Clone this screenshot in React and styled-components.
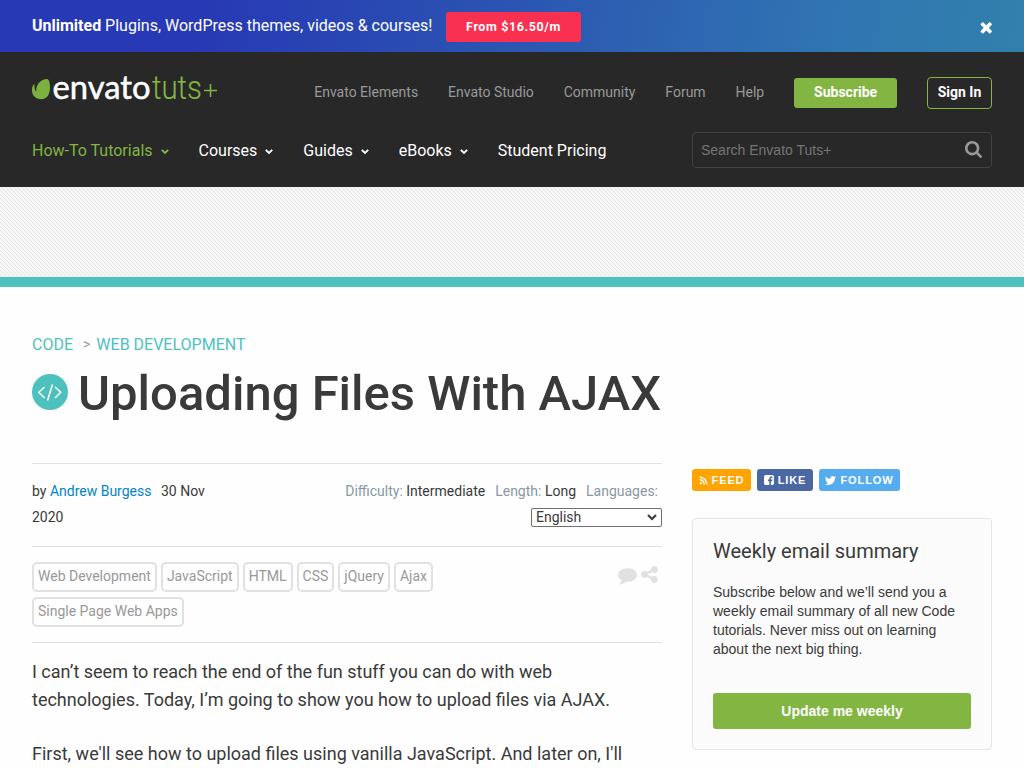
import React from "react";
import styled, { createGlobalStyle } from "styled-components";
import { FaRss, FaTwitter } from "react-icons/fa";

const roboto = `Roboto, "Liberation Sans", sans-serif`;
const arial = `"Liberation Sans", Arial, sans-serif`;

const Global = createGlobalStyle`
  *, *::before, *::after { box-sizing: border-box; }
  html, body { margin: 0; padding: 0; }
  body { background: #fefefe; font-family: ${roboto}; color: #3a3a3a; height: 768px; overflow: hidden; }
  h1, h2, p { margin: 0; font-weight: 400; }
  a { color: inherit; text-decoration: none; }
  svg { display: block; flex: none; }
`;

const Banner = styled.div`
  display: flex;
  align-items: flex-start;
  height: 52px;
  padding: 12px 32px 0;
  background: linear-gradient(100deg, #2739b4 0%, #2739b4 20%, #2b55b1 50%, #3076b2 82%, #3180ac 100%);
  color: #fff;
`;
const BannerText = styled.div`
  font-size: 16px;
  line-height: 27px;
  width: 414px;
  white-space: nowrap;
`;
const PriceButton = styled.a`
  width: 135px;
  height: 30px;
  border-radius: 3px;
  background: #f9304f;
  font-size: 12.5px;
  font-weight: 700;
  letter-spacing: 0.6px;
  line-height: 30px;
  text-align: center;
`;
const Close = styled.button`
  margin: 9px 0 0 auto;
  padding: 0;
  border: 0;
  background: none;
  color: #fff;
`;

const Header = styled.header`
  height: 135px;
  padding: 25px 32px 0;
  background: #282828;
`;
const HeaderRow = styled.div`
  display: flex;
  align-items: flex-start;
  justify-content: space-between;
  height: ${(p) => p.$height}px;
`;
const SiteNav = styled.nav`
  display: flex;
  gap: 29.9px;
  font-size: 14px;
  line-height: 30px;
  color: #999;
`;
const Subscribe = styled.a`
  width: 103px;
  height: 30px;
  margin-top: 1px;
  border-radius: 3px;
  background: #82b541;
  color: #fff;
  font-weight: 700;
  line-height: 28px;
  text-align: center;
`;
const SignIn = styled.a`
  width: 65px;
  height: 32px;
  border: 1px solid #82b541;
  border-radius: 4px;
  color: #fff;
  font-weight: 700;
  line-height: 28px;
  text-align: center;
`;
const MainNav = styled.nav`
  display: flex;
  gap: 30px;
  font-size: 16px;
  line-height: 38px;
`;
const MainLink = styled.a`
  display: flex;
  align-items: center;
  gap: 8px;
  color: ${(p) => (p.$active ? "#82b541" : "#fff")};
  svg { margin-top: 2px; }
`;
const Search = styled.div`
  display: flex;
  align-items: center;
  justify-content: space-between;
  width: 300px;
  height: 36px;
  padding: 0 9px 0 8px;
  border: 1px solid #424242;
  border-radius: 4px;
  color: #757575;
  font-family: ${arial};
  font-size: 14px;
  svg { margin-bottom: 2px; color: #999; }
`;

const AdStrip = styled.div`
  height: 100px;
  border-bottom: 10px solid #4dc1be;
  background: repeating-linear-gradient(45deg, #f7f7f7 0 1.42px, #e4e4e4 1.42px 2.13px, #f7f7f7 2.13px 2.83px);
`;

const Page = styled.main`
  padding: 48px 32px 0;
`;
const Crumbs = styled.div`
  display: flex;
  font-size: 16px;
  line-height: 19px;
  color: #4dc1be;
`;
const CrumbArrow = styled.span`
  margin: 0 6px 0 10px;
  font-size: 14px;
  color: #999;
`;
const TitleRow = styled.div`
  display: flex;
  height: 98px;
  margin-top: 11px;
`;
const Title = styled.h1`
  margin-left: 10px;
  font-size: 49px;
  font-weight: 500;
  line-height: 58px;
  white-space: nowrap;
`;
const TopicIcon = styled.svg`
  margin-top: 9px;
`;
const Columns = styled.div`
  display: grid;
  grid-template-columns: 630px 300px;
  gap: 30px;
`;

const MetaRow = styled.div`
  display: flex;
  justify-content: space-between;
  height: 83px;
  padding-top: 14px;
  border-top: 1px solid #e1e1e1;
  font-size: 14px;
  line-height: 26px;
`;
const Byline = styled.div`
  width: 190px;
`;
const Author = styled.a`
  margin-right: 6px;
  color: #0085c7;
`;
const Details = styled.div`
  display: flex;
  flex-direction: column;
  align-items: flex-end;
`;
const DetailLine = styled.div`
  display: flex;
  gap: 10px;
  margin-right: 4px;
`;
const Label = styled.span`
  color: #8899a3;
`;
const Language = styled.div`
  display: flex;
  align-items: center;
  justify-content: space-between;
  width: 131px;
  height: 19px;
  margin-top: 4px;
  padding: 0 4px;
  border: 1px solid #6f6f6f;
  border-radius: 2px;
  background: #fff;
  font-size: 14px;
  line-height: 17px;
`;
const TagRow = styled.div`
  display: flex;
  justify-content: space-between;
  height: 97px;
  padding: 15px 4px 0 0;
  border: solid #e1e1e1;
  border-width: 1px 0;
`;
const Tags = styled.div`
  display: flex;
  flex-wrap: wrap;
  align-content: flex-start;
  gap: 5px 4px;
  width: 460px;
`;
const Tag = styled.a`
  height: 30px;
  padding: 0 4px;
  border: 2px solid #e1e1e1;
  border-radius: 5px;
  color: #999;
  font-size: 14px;
  line-height: 25px;
`;
const Actions = styled.div`
  display: flex;
  gap: 4px;
  color: #e1e1e1;
`;
const Copy = styled.div`
  padding-top: 15px;
  font-size: 18px;
  line-height: 28px;
  p { margin-bottom: 26px; white-space: nowrap; }
`;

const Sidebar = styled.aside`
  padding-top: 6px;
`;
const Socials = styled.div`
  display: flex;
  gap: 6px;
`;
const Social = styled.a`
  display: flex;
  align-items: center;
  justify-content: center;
  gap: 4px;
  width: ${(p) => p.$width}px;
  height: 22px;
  border-radius: 3px;
  background: ${(p) => p.$color};
  color: #fff;
  font-family: ${arial};
  font-size: 11px;
  font-weight: 700;
  letter-spacing: 0.9px;
`;
const Card = styled.section`
  height: 232px;
  margin-top: 27px;
  padding: 19px 20px;
  border: 1px solid #e1e8ed;
  border-radius: 4px;
  background: #fbfbfb;
`;
const CardTitle = styled.h2`
  font-size: 20px;
  line-height: 26px;
`;
const CardText = styled.p`
  margin-top: 19px;
  font-family: ${arial};
  font-size: 14px;
  line-height: 19px;
  white-space: nowrap;
`;
const UpdateButton = styled.a`
  display: block;
  height: 36px;
  margin-top: 34px;
  border-radius: 3px;
  background: #82b541;
  color: #fff;
  font-family: ${arial};
  font-size: 14px;
  font-weight: 700;
  line-height: 36px;
  text-align: center;
`;

const LogoArt = styled.svg`
  margin-top: -16px;
`;

const paths = {
  times: "M1490 1322q0 40-28 68l-136 136q-28 28-68 28t-68-28l-294-294-294 294q-28 28-68 28t-68-28l-136-136q-28-28-28-68t28-68l294-294-294-294q-28-28-28-68t28-68l136-136q28-28 68-28t68 28l294 294 294-294q28-28 68-28t68 28l136 136q28 28 28 68t-28 68l-294 294 294 294q28 28 28 68z",
  search: "M1216 832q0-185-131.5-316.5t-316.5-131.5-316.5 131.5-131.5 316.5 131.5 316.5 316.5 131.5 316.5-131.5 131.5-316.5zm512 832q0 52-38 90t-90 38q-54 0-90-38l-343-342q-179 124-399 124-143 0-273.5-55.5t-225-150-150-225-55.5-273.5 55.5-273.5 150-225 225-150 273.5-55.5 273.5 55.5 225 150 150 225 55.5 273.5q0 220-124 399l343 343q37 37 37 90z",
  share: "M1344 1024q133 0 226.5 93.5t93.5 226.5-93.5 226.5-226.5 93.5-226.5-93.5-93.5-226.5q0-12 2-34l-360-180q-92 86-218 86-133 0-226.5-93.5t-93.5-226.5 93.5-226.5 226.5-93.5q126 0 218 86l360-180q-2-22-2-34 0-133 93.5-226.5t226.5-93.5 226.5 93.5 93.5 226.5-93.5 226.5-226.5 93.5q-126 0-218-86l-360 180q2 22 2 34t-2 34l360 180q92-86 218-86z",
  comment: "M1792 896q0 174-120 321.5t-326 233-450 85.5q-70 0-145-8-198 175-460 242-49 14-114 22-17 2-30.5-9t-17.5-29v-1q-3-4-.5-12t2-10 4.5-9.5l6-9 7-8.5 8-9q7-8 31-34.5t34.5-38 31-39.5 32.5-51 27-59 26-76q-157-89-247.5-220t-90.5-281q0-130 71-248.5t191-204.5 286-136.5 348-50.5q244 0 450 85.5t326 233 120 321.5z",
  facebook: "M1376 128q119 0 203.5 84.5t84.5 203.5v960q0 119-84.5 203.5t-203.5 84.5h-188v-595h199l30-232h-229v-148q0-56 23.5-84t91.5-28l122-1v-207q-63-9-178-9-136 0-217.5 80t-81.5 226v171h-200v232h200v595h-532q-119 0-203.5-84.5t-84.5-203.5v-960q0-119 84.5-203.5t203.5-84.5h960z",
};

const Icon = ({ name, size, box = "0 0 1792 1792", height }) => (
  <svg width={size} height={height || size} viewBox={box} fill="currentColor">
    <path d={paths[name]} />
  </svg>
);

const Chevron = ({ width = 8, stroke = 1.9 }) => (
  <svg width={width} height={width * 0.65} viewBox="0 0 8 5.2" fill="none" stroke="currentColor" strokeWidth={stroke}>
    <path d="M0.8 0.8 4 4 7.2 0.8" />
  </svg>
);

const Logo = () => (
  <LogoArt width="188" height="56" viewBox="0 -16 188 56">
    <path
      d="M14.500 2.100C16.900 1.600 18 6 18 10.500 18 18 14.500 22.200 9.200 22.200 4 22.200 0 18.500 0 13.500 0 11 .4 9 1.600 7.400c.5-.5 1-.2.900.500-.2 2.300.2 4.500 1.200 6.100.3.400.7.300.6-.3C3.900 8.500 7.500 3.200 14.500 2.100z"
      fill="#7cb03f"
    />
    <text x="20.500" y="22" fill="#fff" stroke="#fff" strokeWidth="0.500" fontFamily="Lato" fontWeight="400" fontSize="33" textLength="98" lengthAdjust="spacingAndGlyphs">envato</text>
    <text x="120" y="22" fill="#82b541" stroke="#82b541" strokeWidth="0.150" fontFamily="Roboto" fontWeight="300" fontSize="32.500" textLength="50" lengthAdjust="spacingAndGlyphs">tuts</text>
    <path d="M172 13.500h13M178.500 7v13" stroke="#82b541" strokeWidth="1.500" />
  </LogoArt>
);

const siteLinks = ["Envato Elements", "Envato Studio", "Community", "Forum", "Help"];
const mainLinks = ["How-To Tutorials", "Courses", "Guides", "eBooks"];
const tags = ["Web Development", "JavaScript", "HTML", "CSS", "jQuery", "Ajax", "Single Page Web Apps"];

export default function App() {
  return (
    <>
      <Global />
      <Banner>
        <BannerText><b>Unlimited</b> Plugins, WordPress themes, videos &amp; courses!</BannerText>
        <PriceButton href="#">From $16.50/m</PriceButton>
        <Close aria-label="Close"><Icon name="times" size={12.5} box="238 238 1316 1316" /></Close>
      </Banner>
      <Header>
        <HeaderRow $height={55}>
          <Logo />
          <SiteNav>
            {siteLinks.map((t) => <a href="#" key={t}>{t}</a>)}
            <Subscribe href="#">Subscribe</Subscribe>
            <SignIn href="#">Sign In</SignIn>
          </SiteNav>
        </HeaderRow>
        <HeaderRow $height={36}>
          <MainNav>
            {mainLinks.map((t, i) => (
              <MainLink href="#" key={t} $active={i === 0}>{t}<Chevron /></MainLink>
            ))}
            <MainLink href="#">Student Pricing</MainLink>
          </MainNav>
          <Search><span>Search Envato Tuts+</span><Icon name="search" size={17} box="64 128 1664 1664" /></Search>
        </HeaderRow>
      </Header>
      <AdStrip />
      <Page>
        <Crumbs><a href="#">CODE</a><CrumbArrow>&gt;</CrumbArrow><a href="#">WEB DEVELOPMENT</a></Crumbs>
        <TitleRow>
          <TopicIcon width="36" height="36" viewBox="0 0 36 36">
            <circle cx="18" cy="18" r="18" fill="#4dc1be" />
            <path d="M12.500 13 6.800 18.300 12.500 24M23 13 28.700 18.300 23 24M20.500 10.500 15.500 26.500" fill="none" stroke="#fff" strokeWidth="1.500" />
          </TopicIcon>
          <Title>Uploading Files With AJAX</Title>
        </TitleRow>
        <Columns>
          <article>
            <MetaRow>
              <Byline>by <Author href="#">Andrew Burgess</Author> 30 Nov<br />2020</Byline>
              <Details>
                <DetailLine>
                  <span><Label>Difficulty:</Label> Intermediate</span>
                  <span><Label>Length:</Label> Long</span>
                  <Label>Languages:</Label>
                </DetailLine>
                <Language>English<Chevron width={10} stroke={1.7} /></Language>
              </Details>
            </MetaRow>
            <TagRow>
              <Tags>{tags.map((t) => <Tag href="#" key={t}>{t}</Tag>)}</Tags>
              <Actions>
                <Icon name="comment" size={19} height={26} />
                <Icon name="share" size={17} box="128 128 1536 1536" height={25} />
              </Actions>
            </TagRow>
            <Copy>
              <p>I can’t seem to reach the end of the fun stuff you can do with web<br />technologies. Today, I’m going to show you how to upload files via AJAX.</p>
              <p>First, we'll see how to upload files using vanilla JavaScript. And later on, I'll</p>
            </Copy>
          </article>
          <Sidebar>
            <Socials>
              <Social href="#" $width={59} $color="#ffa400"><FaRss size={9} />FEED</Social>
              <Social href="#" $width={56} $color="#4a66a3"><Icon name="facebook" size={10} box="128 128 1536 1536" />LIKE</Social>
              <Social href="#" $width={81} $color="#55acee"><FaTwitter size={11} />FOLLOW</Social>
            </Socials>
            <Card>
              <CardTitle>Weekly email summary</CardTitle>
              <CardText>Subscribe below and we’ll send you a<br />weekly email summary of all new Code<br />tutorials. Never miss out on learning<br />about the next big thing.</CardText>
              <UpdateButton href="#">Update me weekly</UpdateButton>
            </Card>
          </Sidebar>
        </Columns>
      </Page>
    </>
  );
}
